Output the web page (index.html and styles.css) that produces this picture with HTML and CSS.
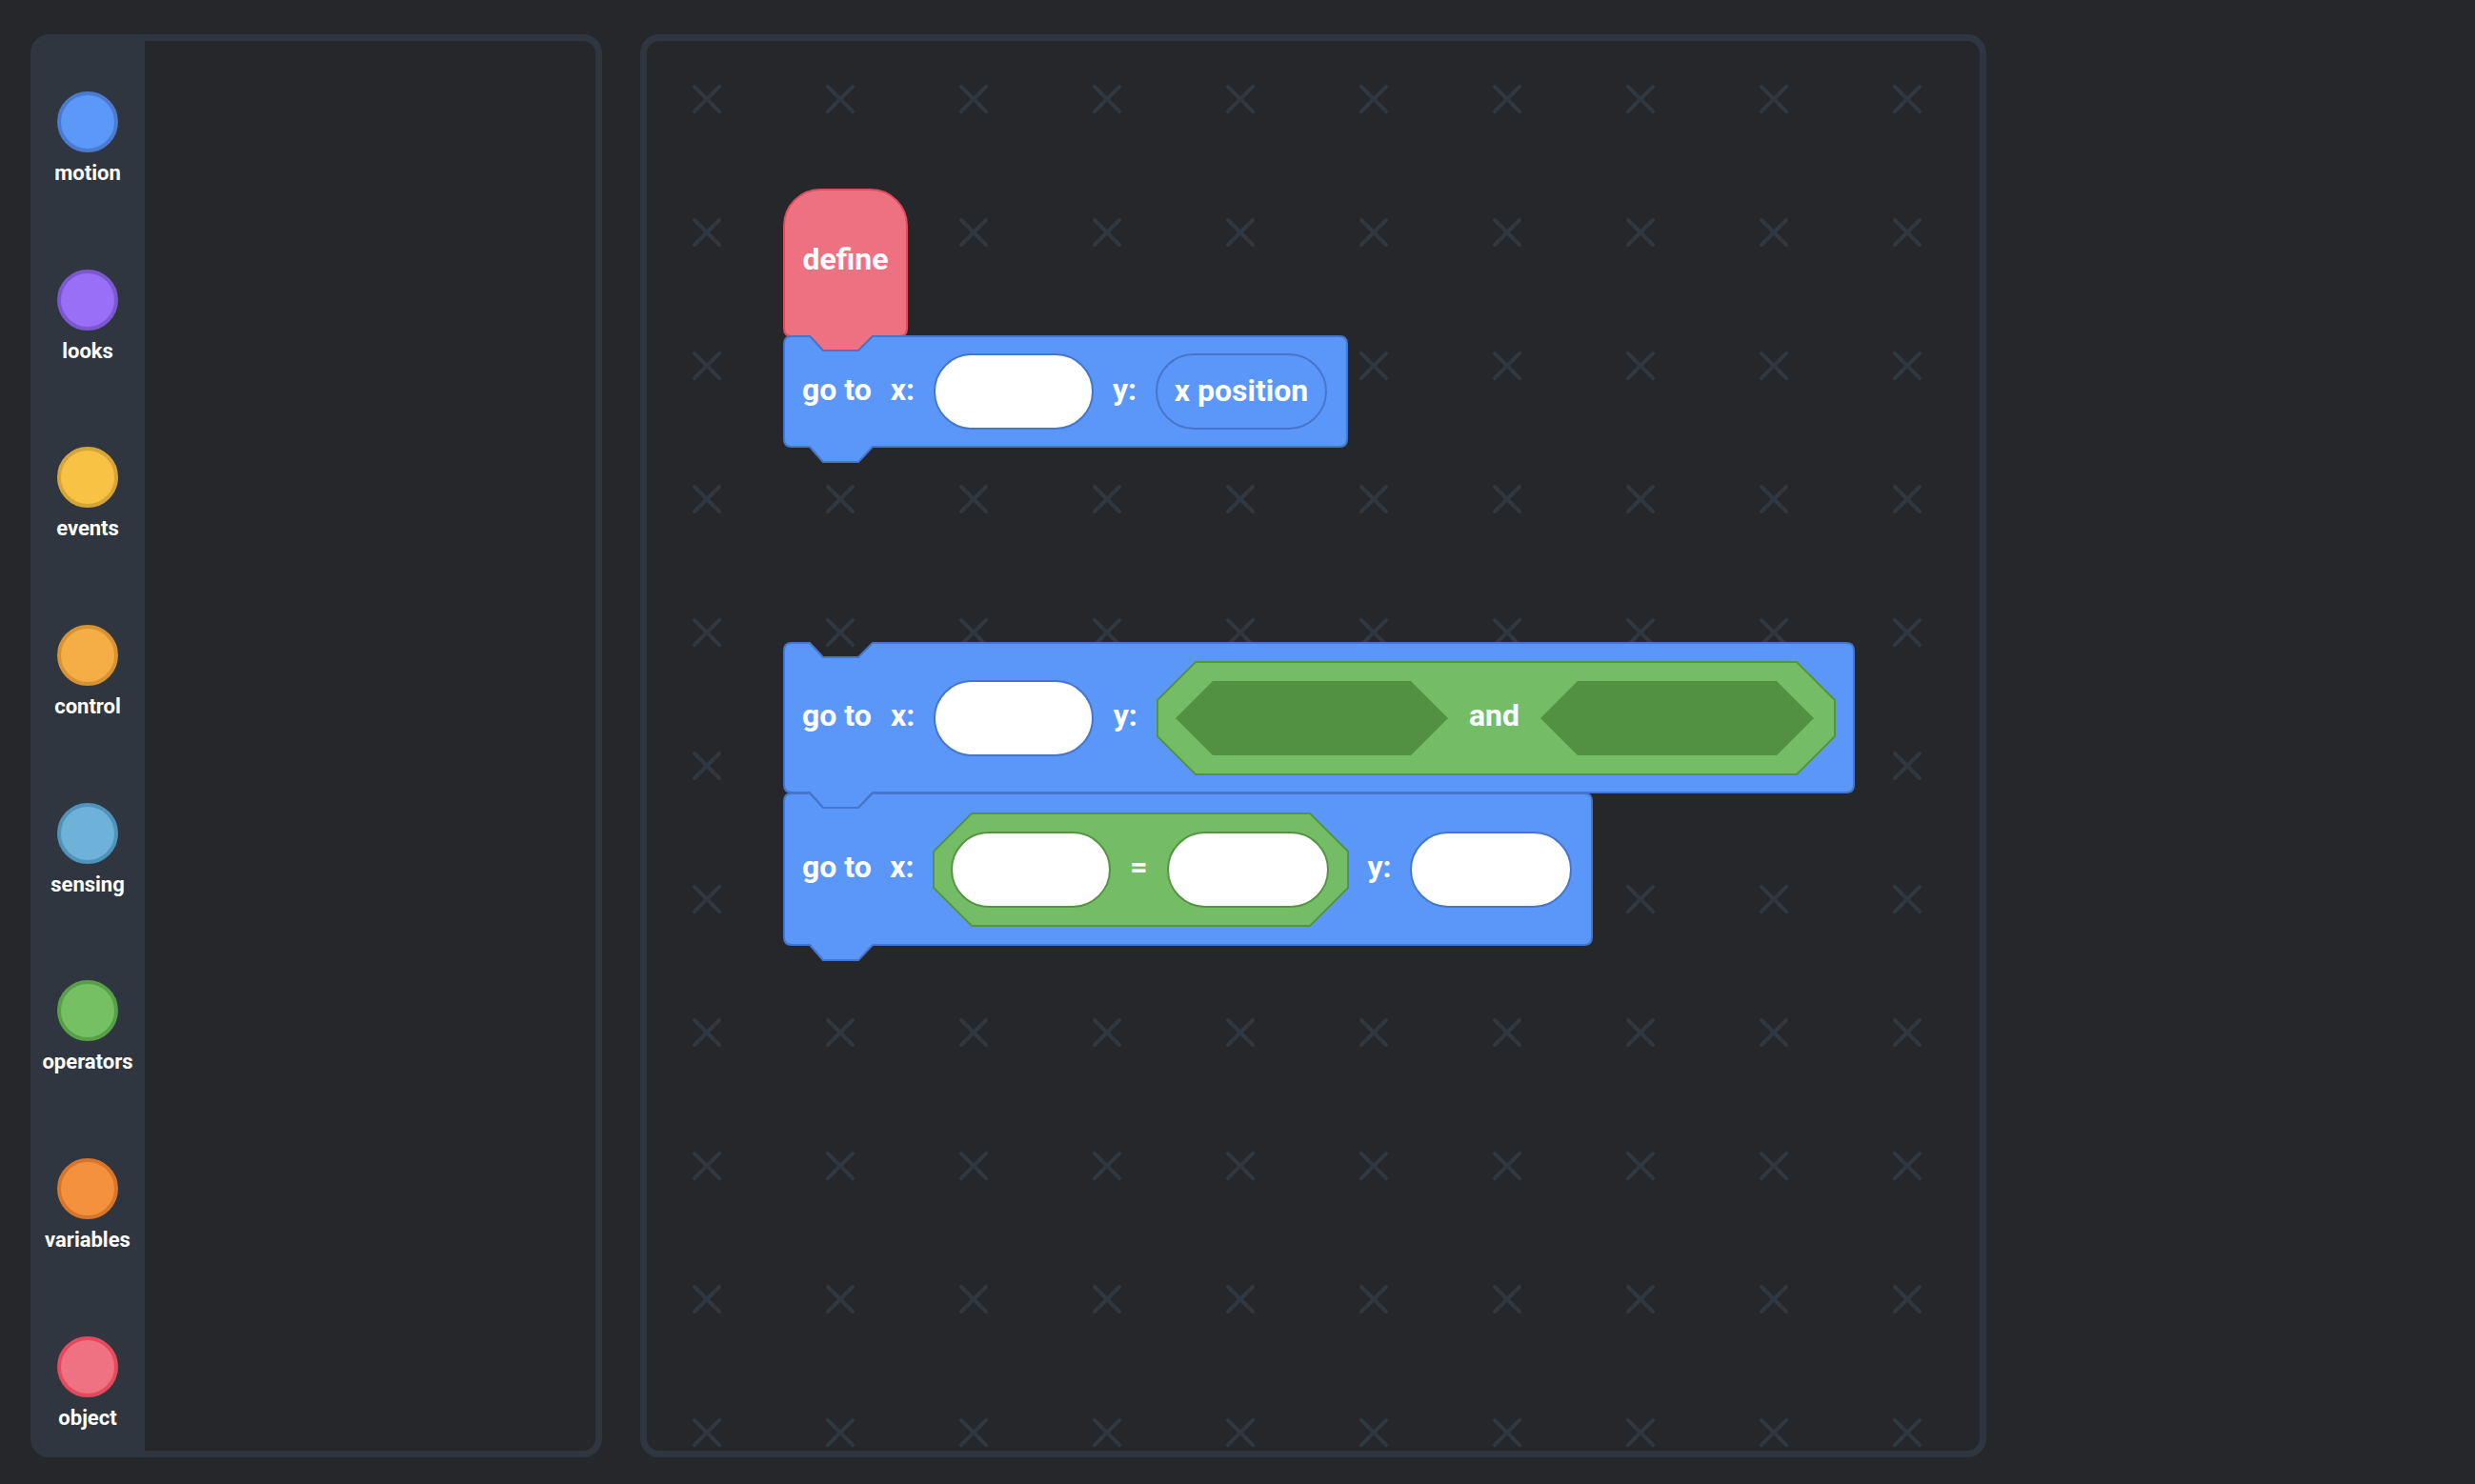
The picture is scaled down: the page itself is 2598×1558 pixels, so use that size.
FILE: index.html
```html
<!DOCTYPE html>
<html lang="en">
<head>
<meta charset="utf-8">
<title>Blocks editor</title>
<link rel="stylesheet" href="styles.css">
</head>
<body>
<div class="app">
  <section class="palette">
    <nav class="categories">
      <div class="cat"><span class="dot dot-motion"></span><span class="cat-label">motion</span></div>
      <div class="cat"><span class="dot dot-looks"></span><span class="cat-label">looks</span></div>
      <div class="cat"><span class="dot dot-events"></span><span class="cat-label">events</span></div>
      <div class="cat"><span class="dot dot-control"></span><span class="cat-label">control</span></div>
      <div class="cat"><span class="dot dot-sensing"></span><span class="cat-label">sensing</span></div>
      <div class="cat"><span class="dot dot-operators"></span><span class="cat-label">operators</span></div>
      <div class="cat"><span class="dot dot-variables"></span><span class="cat-label">variables</span></div>
      <div class="cat"><span class="dot dot-object"></span><span class="cat-label">object</span></div>
    </nav>
    <div class="flyout"></div>
  </section>

  <section class="workspace">
    <div class="canvas">
      <svg class="grid" width="100%" height="100%">
        <defs>
          <pattern id="cross" x="-7" y="-9" width="140" height="140" patternUnits="userSpaceOnUse">
            <path d="M57 57 L83 83 M83 57 L57 83" stroke="#30373f" stroke-width="4" stroke-linecap="round" fill="none"/>
          </pattern>
        </defs>
        <rect width="100%" height="100%" fill="url(#cross)"/>
      </svg>

      <!-- define hat block -->
      <div class="block block-define">
        <svg class="shape" width="131" height="172">
          <path class="pink" d="M1,39 A38,38 0 0 1 39,1 L92,1 A38,38 0 0 1 130,39 L130,147 Q130,155 122,155 L94,155 L79,170 L42,170 L28,155 L9,155 Q1,155 1,147 Z"/>
        </svg>
        <span class="label define-label">define</span>
      </div>

      <!-- go to x: [] y: (x position) -->
      <div class="block block-1">
        <svg class="shape" width="593" height="134">
          <path class="blue" d="M1,9 Q1,1 9,1 L28,1 L42,16 L79,16 L94,1 L584,1 Q592,1 592,9 L592,109 Q592,117 584,117 L94,117 L79,133 L42,133 L28,117 L9,117 Q1,117 1,109 Z"/>
        </svg>
        <span class="label">go to</span>
        <span class="label">x:</span>
        <span class="input"></span>
        <span class="label">y:</span>
        <span class="reporter">x position</span>
      </div>

      <!-- go to x: [] y: <<> and <>> -->
      <div class="block block-2">
        <svg class="shape" width="1125" height="175">
          <path class="blue" d="M1,9 Q1,1 9,1 L28,1 L42,16 L79,16 L94,1 L1116,1 Q1124,1 1124,9 L1124,150 Q1124,158 1116,158 L94,158 L79,174 L42,174 L28,158 L9,158 Q1,158 1,150 Z"/>
        </svg>
        <span class="label">go to</span>
        <span class="label">x:</span>
        <span class="input"></span>
        <span class="label">y:</span>
        <span class="bool bool-and">
          <svg class="bool-shape" width="713" height="120">
            <polygon class="green" points="41,1 672,1 712,41 712,79 672,119 41,119 1,79 1,41"/>
          </svg>
          <span class="slot">
            <svg width="286" height="78"><polygon class="green-dark" points="39,0 247,0 286,39 247,78 39,78 0,39"/></svg>
          </span>
          <span class="label">and</span>
          <span class="slot slot-wide">
            <svg width="287" height="78"><polygon class="green-dark" points="39,0 248,0 287,39 248,78 39,78 0,39"/></svg>
          </span>
        </span>
      </div>

      <!-- go to x: <[] = []> y: [] -->
      <div class="block block-3">
        <svg class="shape" width="850" height="177">
          <path class="blue" d="M1,9 Q1,1 9,1 L28,1 L42,16 L79,16 L94,1 L841,1 Q849,1 849,9 L849,152 Q849,160 841,160 L94,160 L79,176 L42,176 L28,160 L9,160 Q1,160 1,152 Z"/>
        </svg>
        <span class="label">go to</span>
        <span class="label">x:</span>
        <span class="bool bool-eq">
          <svg class="bool-shape" width="437" height="120">
            <polygon class="green" points="41,1 396,1 436,41 436,79 396,119 41,119 1,79 1,41"/>
          </svg>
          <span class="input input-green"></span>
          <span class="label">=</span>
          <span class="input input-green input-wide"></span>
        </span>
        <span class="label">y:</span>
        <span class="input input-wide"></span>
      </div>
    </div>
  </section>
</div>
</body>
</html>
```

FILE: styles.css
```css
html, body {
  margin: 0;
  padding: 0;
}

body {
  background: #26272b;
  font-family: Roboto, "Liberation Sans", sans-serif;
  color: #ffffff;
  width: 2598px;
  height: 1558px;
  overflow: hidden;
}

.app {
  display: flex;
  gap: 40px;
  padding: 36px 0 0 32px;
}

/* ---------- left palette ---------- */
.palette {
  width: 600px;
  height: 1494px;
  box-sizing: border-box;
  border: 7px solid #30363f;
  border-radius: 20px;
  display: flex;
  overflow: hidden;
}

.categories {
  width: 113px;
  box-sizing: border-box;
  background: #30363f;
  padding: 53px 7px 0 0;
  display: flex;
  flex-direction: column;
  align-items: center;
  gap: 87.7px;
}

.cat {
  display: flex;
  flex-direction: column;
  align-items: center;
}

.dot {
  width: 64px;
  height: 64px;
  box-sizing: border-box;
  border-radius: 50%;
  border: 4px solid;
}

.dot-motion    { background: #5b98f8; border-color: #4a7bd0; }
.dot-looks     { background: #9a6ff7; border-color: #7b57d0; }
.dot-events    { background: #f8c244; border-color: #d6a53a; }
.dot-control   { background: #f5ad45; border-color: #d79233; }
.dot-sensing   { background: #6eb2d9; border-color: #4f93bb; }
.dot-operators { background: #74c062; border-color: #58a048; }
.dot-variables { background: #f4913d; border-color: #d7762b; }
.dot-object    { background: #ee7282; border-color: #e5495e; }

.cat-label {
  margin-top: 9px;
  font-size: 22px;
  line-height: 26px;
  font-weight: 700;
  color: #ffffff;
}

.flyout {
  flex: 1;
}

/* ---------- workspace ---------- */
.workspace {
  width: 1413px;
  height: 1494px;
  box-sizing: border-box;
  border: 7px solid #30363f;
  border-radius: 20px;
  overflow: hidden;
}

.canvas {
  position: relative;
  width: 100%;
  height: 100%;
  overflow: hidden;
}

.grid {
  position: absolute;
  left: 0;
  top: 0;
  display: block;
}

/* ---------- blocks ---------- */
.block {
  position: absolute;
  box-sizing: border-box;
  display: flex;
  align-items: center;
  justify-content: space-between;
  padding: 0 22px 0 20px;
  font-size: 32px;
  font-weight: 700;
  line-height: 38px;
  color: #ffffff;
}

.block > *,
.bool > * {
  position: relative;
  z-index: 1;
}

.block > .shape,
.bool > .bool-shape {
  position: absolute;
  left: 0;
  top: 0;
  z-index: 0;
  overflow: visible;
}

.blue  { fill: #5b97f8; stroke: #4676cc; stroke-width: 2; stroke-linejoin: round; }
.pink  { fill: #ee7182; stroke: #e34a5e; stroke-width: 2; stroke-linejoin: round; }
.green { fill: #74bc66; stroke: #54963f; stroke-width: 2; }
.green-dark { fill: #529142; }

.label {
  white-space: nowrap;
  padding-bottom: 5px;
}

.block-define {
  left: 143px;
  top: 155px;
  width: 131px;
  height: 154px;
  align-items: flex-start;
  justify-content: center;
  padding: 55px 0 0 0;
}

.define-label {
  padding-bottom: 0;
}

.block-1 {
  left: 143px;
  top: 309px;
  width: 593px;
  height: 118px;
}

.block-2 {
  left: 143px;
  top: 631px;
  width: 1125px;
  height: 159px;
  padding: 0 20px 0 20px;
}

.block-3 {
  left: 143px;
  top: 789px;
  width: 850px;
  height: 161px;
}

.input {
  width: 168px;
  height: 80px;
  box-sizing: border-box;
  background: #ffffff;
  border: 2px solid #4676cc;
  border-radius: 40px;
}

.input-wide {
  width: 170px;
}

.input-green {
  border-color: #54963f;
}

.reporter {
  width: 180px;
  height: 80px;
  box-sizing: border-box;
  border: 2px solid #4676cc;
  border-radius: 40px;
  background: #5b97f8;
  display: flex;
  align-items: center;
  justify-content: center;
  white-space: nowrap;
  padding-bottom: 3px;
}

.bool {
  position: relative;
  height: 120px;
  box-sizing: border-box;
  display: flex;
  align-items: center;
  justify-content: space-between;
}

.bool-and {
  width: 713px;
  padding: 0 23px 0 20px;
}

.bool-eq {
  width: 437px;
  padding: 0 21px 0 19px;
}

.slot {
  display: block;
  width: 286px;
  height: 78px;
}

.slot-wide {
  width: 287px;
}

.slot svg {
  display: block;
}
```
